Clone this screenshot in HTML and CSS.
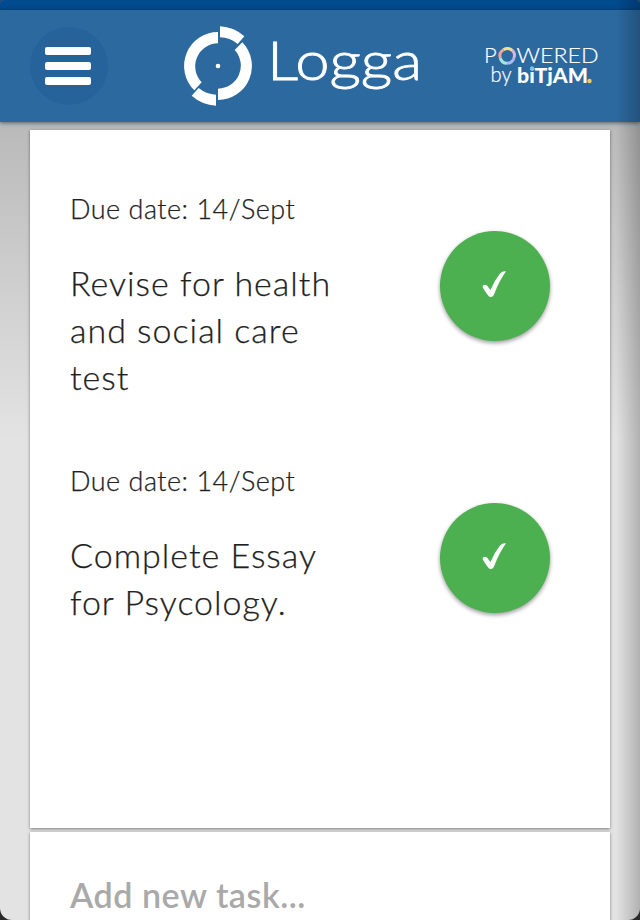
FILE: index.html
```html
<!DOCTYPE html>
<html lang="en">
<head>
  <meta charset="UTF-8" />
  <meta name="viewport" content="width=device-width, initial-scale=1.0"/>
  <title>Logga</title>
  <link rel="stylesheet" href="styles.css">
</head>
<body>
  <div class="app">
    <div class="status-bar"></div>
    <header>
      <button class="menu" aria-label="Menu">
        <span></span>
        <span></span>
        <span></span>
      </button>

      <svg class="logo" width="240" height="82" viewBox="0 0 240 82">
        <g transform="translate(35 41) scale(0.3333)" fill="#fff">
          <path d="M0 -102 A102 102 0 0 0 -71 73 L-49 49 A69 69 0 0 1 0 -68 Z"/>
          <path d="M73 -71 A102 102 0 0 1 0 102 L0 68 A69 69 0 0 0 50 -48 Z"/>
          <path d="M6 -119 A119 119 0 0 1 79 -89 L59 -66 A87 87 0 0 0 6 -86 Z"/>
          <path d="M-6 119 A119 119 0 0 1 -79 89 L-58 66 A87 87 0 0 0 -6 86 Z"/>
          <circle r="7"/>
        </g>
        <text class="logo-name" x="84" y="55" textLength="155" lengthAdjust="spacingAndGlyphs">Logga</text>
      </svg>

      <svg class="powered" width="120" height="60" viewBox="0 -7 120 60">
        <text class="powered-thin" x="2" y="20">P</text>
        <g fill="none" stroke-width="3">
          <path d="M18.200 15 A7.300 7.300 0 0 1 21.500 6.700" stroke="#f3a6a0"/>
          <path d="M21.500 6.700 A7.300 7.300 0 0 1 30.500 7.600" stroke="#f6dc8c"/>
          <path d="M30.500 7.600 A7.300 7.300 0 0 1 31.800 15.500" stroke="#d8b6dc"/>
          <path d="M31.800 15.500 A7.300 7.300 0 0 1 25 20.300" stroke="#a9b9f5"/>
          <path d="M25 20.300 A7.300 7.300 0 0 1 18.200 15" stroke="#a4e3e0"/>
        </g>
        <text class="powered-thin" x="34.500" y="20" textLength="82" lengthAdjust="spacingAndGlyphs">WERED</text>
        <text class="powered-by" x="8.500" y="39" textLength="21" lengthAdjust="spacingAndGlyphs">by</text>
        <text class="powered-brand" x="35" y="40" textLength="71" lengthAdjust="spacingAndGlyphs">biTjAM</text>
        <circle cx="107.500" cy="38" r="2.200" fill="#e8cf6a"/>
        <circle cx="50" cy="25.300" r="2" fill="#75c5f0"/>
      </svg>
    </header>

    <main>
      <section class="card tasks">
        <article class="task">
          <div>
            <p class="due">Due date: 14/Sept</p>
            <h2>Revise for health and social care test</h2>
          </div>
          <button class="done" aria-label="Done">
            <svg width="28" height="30" viewBox="0 0 28 30">
              <path d="M1.500 17 Q2 14 5.500 15 L9.500 20 Q13 11 19 3.500 Q22 0.800 25 1.500 Q18.500 10 13.200 24 Q12 27.500 9 27 Q7 26.500 1.500 17 Z"/>
            </svg>
          </button>
        </article>

        <article class="task">
          <div>
            <p class="due">Due date: 14/Sept</p>
            <h2>Complete Essay for Psycology.</h2>
          </div>
          <button class="done" aria-label="Done">
            <svg width="28" height="30" viewBox="0 0 28 30">
              <path d="M1.500 17 Q2 14 5.500 15 L9.500 20 Q13 11 19 3.500 Q22 0.800 25 1.500 Q18.500 10 13.200 24 Q12 27.500 9 27 Q7 26.500 1.500 17 Z"/>
            </svg>
          </button>
        </article>
      </section>

      <section class="card new-task">Add new task...</section>
    </main>
    <div class="edge"></div>
  </div>
</body>
</html>
```
FILE: styles.css
```css
body {
  margin: 0;
  background: #292929;
  font-family: Lato, 'Open Sans', sans-serif;
  overflow: hidden;
}

.app {
  position: relative;
  height: 920px;
  overflow: hidden;
  border-radius: 3px 3px 12px 12px;
  background: linear-gradient(#b9b9b9 120px, #e3e3e3 440px);
}

.status-bar {
  height: 10px;
  background: #004a8e;
}

header {
  display: flex;
  align-items: center;
  height: 112px;
  box-sizing: border-box;
  padding: 0 38px 0 30px;
  background: #2c699f;
  box-shadow: 0 1px 4px rgba(0,0,0,0.5);
}

.menu {
  display: flex;
  flex-direction: column;
  align-items: center;
  justify-content: center;
  gap: 7px;
  width: 78px;
  height: 78px;
  padding: 0 3px 0 0;
  border: none;
  border-radius: 50%;
  background: #25639a;
}

.menu span {
  width: 46px;
  height: 8px;
  border-radius: 2px;
  background: white;
}

.logo {
  margin-left: 75px;
  overflow: visible;
}

.logo-name {
  font-size: 54px;
  font-weight: 300;
  fill: white;
  stroke: white;
  stroke-width: 0.8px;
}

.powered {
  margin-left: auto;
}

.powered-thin {
  font-size: 22px;
  font-weight: 300;
  fill: white;
  stroke: white;
  stroke-width: 0.2px;
}

.powered-by {
  font-size: 21px;
  font-weight: 300;
  fill: white;
  stroke: white;
  stroke-width: 0.2px;
}

.powered-brand {
  font-size: 21px;
  font-weight: 900;
  fill: white;
}

main {
  display: flex;
  flex-direction: column;
  gap: 4px;
  padding: 8px 30px 0;
}

.card {
  box-sizing: border-box;
  background: white;
  box-shadow: 0 1px 3px rgba(0,0,0,0.45);
}

.tasks {
  height: 698px;
  padding: 60px 60px 0 40px;
}

.task {
  display: flex;
  justify-content: space-between;
  height: 272px;
  color: #212121;
  -webkit-text-stroke: 0.25px #212121;
}

.due {
  margin: 0 0 31px;
  font-size: 27px;
  font-weight: 300;
  line-height: 38px;
  letter-spacing: 0.5px;
}

h2 {
  width: 285px;
  margin: 0;
  font-size: 34px;
  font-weight: 300;
  line-height: 47px;
  letter-spacing: 1px;
}

.done {
  width: 110px;
  height: 110px;
  margin-top: 41px;
  padding: 0;
  border: none;
  border-radius: 50%;
  background: #4caf50;
  box-shadow: 0 2px 4px rgba(0,0,0,0.4);
}

.done path {
  fill: white;
}

.new-task {
  height: 120px;
  padding: 40px;
  color: #a9a9a9;
  font-size: 34px;
  font-weight: 600;
  line-height: 46px;
  letter-spacing: 0.55px;
}

/* shade along the right side of the screen */
.edge {
  position: absolute;
  top: 0;
  right: 0;
  width: 24px;
  height: 100%;
  background: linear-gradient(to right, rgba(0,0,0,0), rgba(0,0,0,0.22));
}
```
